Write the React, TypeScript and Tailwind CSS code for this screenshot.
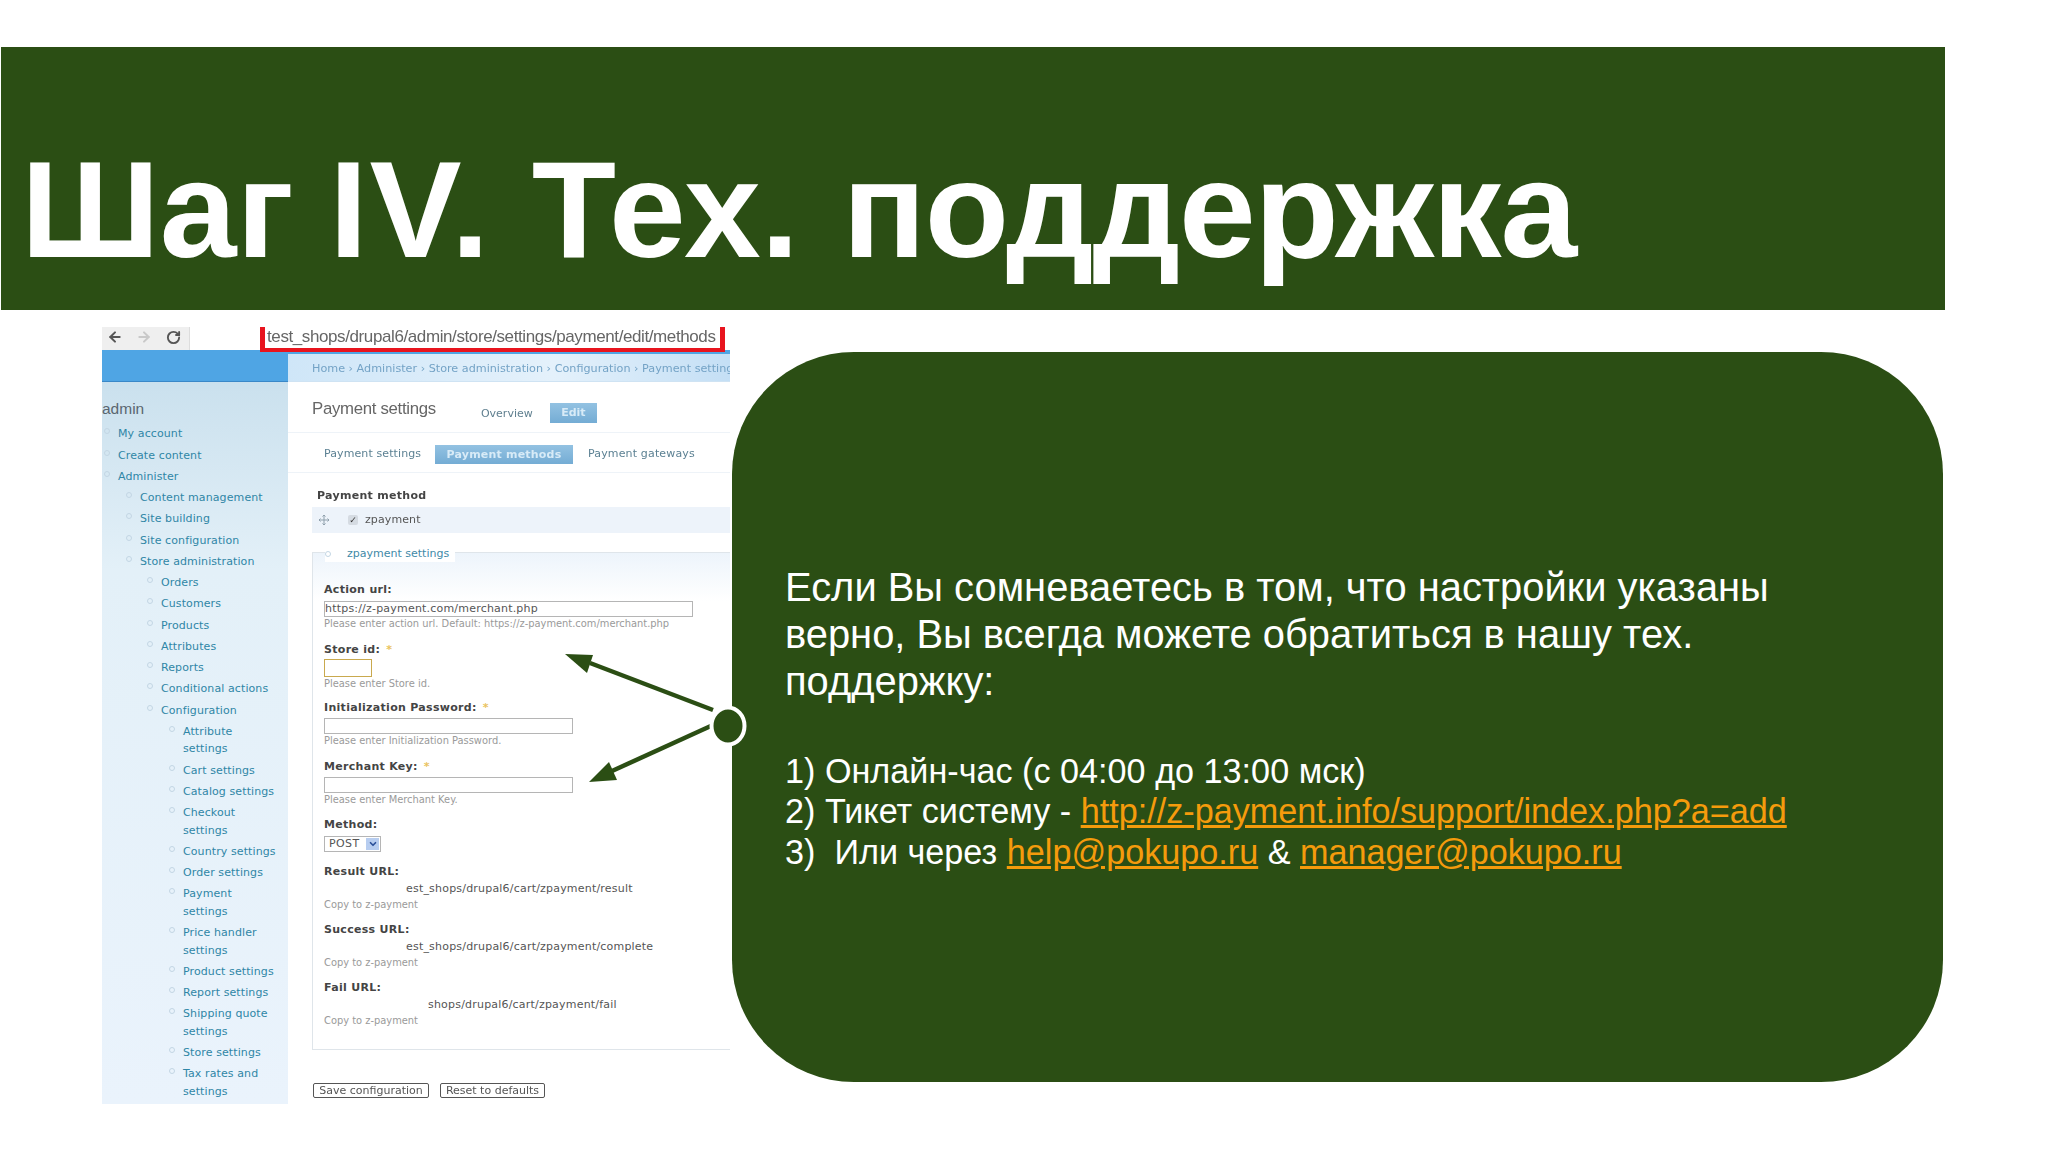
import React from "react";
import { ArrowLeft, ArrowRight, ChevronDown, RotateCw } from "lucide-react";

const menu: [string, number][] = [
  ["My account", 0],
  ["Create content", 0],
  ["Administer", 0],
  ["Content management", 1],
  ["Site building", 1],
  ["Site configuration", 1],
  ["Store administration", 1],
  ["Orders", 2],
  ["Customers", 2],
  ["Products", 2],
  ["Attributes", 2],
  ["Reports", 2],
  ["Conditional actions", 2],
  ["Configuration", 2],
  ["Attribute\nsettings", 3],
  ["Cart settings", 3],
  ["Catalog settings", 3],
  ["Checkout\nsettings", 3],
  ["Country settings", 3],
  ["Order settings", 3],
  ["Payment\nsettings", 3],
  ["Price handler\nsettings", 3],
  ["Product settings", 3],
  ["Report settings", 3],
  ["Shipping quote\nsettings", 3],
  ["Store settings", 3],
  ["Tax rates and\nsettings", 3],
];

const indent = ["pl-[16px]", "pl-[38px]", "pl-[59px]", "pl-[81px]"];

function Sidebar() {
  return (
    <div className="w-[186px] shrink-0 flex flex-col bg-[linear-gradient(#c6deec,#e3f0f8_220px,#eaf3fc)]">
      <div className="h-[32px] bg-[#4fa5e4] border-b border-[#3a88c8]" />
      <div className="h-[44px] pt-[17px] font-['Liberation_Sans',sans-serif] text-[15.5px] leading-[20px] text-[#5a6670]">
        admin
      </div>
      <ul className="font-['DejaVu_Sans',sans-serif] text-[11px] leading-[17.5px] tracking-[0.1px] text-[#2f86a6]">
        {menu.map(([label, level]) => (
          <li key={label} className={`relative mb-[3.75px] whitespace-pre-line ${indent[level]}`}>
            <span className="absolute top-[3px] -ml-[14px] h-[6px] w-[6px] rounded-full border border-[#c3d6e4]" />
            {label}
          </li>
        ))}
      </ul>
    </div>
  );
}

function Label({ text, required }: { text: string; required?: boolean }) {
  return (
    <div className="h-[16px] leading-[16px] font-bold tracking-[0.3px] text-[#444]">
      {text}
      {required && <span className="ml-[6px] text-[#eac35e]">*</span>}
    </div>
  );
}

function Help({ text, className = "" }: { text: string; className?: string }) {
  return <div className={`h-[14px] leading-[14px] text-[9.9px] text-[#9a9a9a] ${className}`}>{text}</div>;
}

function Input({ className, children }: { className: string; children?: React.ReactNode }) {
  return <div className={`border border-[#b5b5b5] bg-white leading-[14px] ${className}`}>{children}</div>;
}

function UrlField({ label, value, pad, mt }: { label: string; value: string; pad: string; mt: string }) {
  return (
    <div className={mt}>
      <Label text={label} />
      <div className={`mt-[1px] h-[16px] leading-[16px] tracking-[0.2px] text-[#555] ${pad}`}>{value}</div>
      <Help text="Copy to z-payment" className="mt-[1px]" />
    </div>
  );
}

function Main() {
  return (
    <div className="flex-1 flex flex-col min-w-0 font-['DejaVu_Sans',sans-serif] text-[11px] text-[#555]">
      <div className="h-[32px] border-t-4 border-[#4fa5e4] border-b border-b-[#cfe3f3] bg-[linear-gradient(90deg,#cfe6f8,#e4f1fb_60%,#c4dff5)] pl-[24px] leading-[29px] text-[11.2px] text-[#74a3c6] whitespace-nowrap overflow-hidden">
        Home › Administer › Store administration › Configuration › Payment settings
      </div>

      <div className="h-[51px] flex items-start pl-[24px] border-b border-[#eef3f8]">
        <div className="mt-[16px] font-['Liberation_Sans',sans-serif] text-[16.8px] leading-[22px] text-[#666] tracking-[-0.3px]">
          Payment settings
        </div>
        <div className="ml-[45px] mt-[24px] w-[54px] leading-[16px] text-[#5f7f8f]">Overview</div>
        <div className="ml-[15px] mt-[21px] h-[20px] w-[47px] bg-[linear-gradient(#93c2e2,#74acd4)] text-center font-bold leading-[20px] text-[#d8ebf7]">
          Edit
        </div>
      </div>

      <div className="h-[40px] flex items-center pl-[36px] pt-[3px] border-b border-[#eef3f8] text-[#5c8193]">
        <span className="w-[111px] tracking-[0.1px]">Payment settings</span>
        <span className="h-[19px] w-[138px] bg-[linear-gradient(#93c2e2,#74acd4)] text-center font-bold leading-[19px] tracking-[0.2px] text-[#d8ebf7]">
          Payment methods
        </span>
        <span className="ml-[15px] tracking-[0.15px]">Payment gateways</span>
      </div>

      <div className="h-[34px] pt-[15px] pl-[29px] font-bold leading-[16px] tracking-[0.3px] text-[#444]">Payment method</div>
      <div className="ml-[24px] h-[26px] flex items-center bg-[#edf3fa]">
        <svg viewBox="0 0 12 12" className="ml-[6px] h-[12px] w-[12px] text-[#8fa0ac]" fill="none" stroke="currentColor">
          <path d="M6 1v10M1 6h10M4.500 2.500 6 1l1.500 1.500M4.500 9.500 6 11l1.500-1.500M2.500 4.500 1 6l1.500 1.500M9.500 4.500 11 6 9.500 7.500" />
        </svg>
        <span className="ml-[18px] h-[10px] w-[10px] rounded-[2px] bg-[#d5dbe2] text-center text-[9px] leading-[10px] text-[#333]">✓</span>
        <span className="ml-[7px] tracking-[0.1px]">zpayment</span>
      </div>

      <div className="relative mt-[19px] ml-[24px] h-[498px] border-l border-t border-b border-[#dfe5ea] bg-[linear-gradient(#edf4fb,#ffffff_48px)] pl-[11px] pt-[29px]">
        <div className="absolute -top-[7px] left-[12px] flex h-[16px] items-center bg-white pr-[6px] leading-[16px] text-[#3f8aa8]">
          <span className="mr-[16px] h-[6px] w-[6px] rounded-full border border-[#c3d6e4]" />
          zpayment settings
        </div>

        <Label text="Action url:" />
        <Input className="mt-[3px] h-[16px] w-[369px] tracking-[0.2px]">https://z-payment.com/merchant.php</Input>
        <Help text="Please enter action url. Default: https://z-payment.com/merchant.php" />

        <div className="mt-[11px]">
          <Label text="Store id:" required />
          <Input className="mt-[1px] h-[18px] w-[48px] !border-[#c9a94e]" />
          <Help text="Please enter Store id." />
        </div>

        <div className="mt-[9px]">
          <Label text="Initialization Password:" required />
          <Input className="mt-[2px] h-[16px] w-[249px]" />
          <Help text="Please enter Initialization Password." />
        </div>

        <div className="mt-[11px]">
          <Label text="Merchant Key:" required />
          <Input className="mt-[2px] h-[16px] w-[249px]" />
          <Help text="Please enter Merchant Key." />
        </div>

        <div className="mt-[10px]">
          <Label text="Method:" />
          <Input className="mt-[3px] flex h-[16px] w-[57px] items-center pl-[4px] tracking-[0.4px]">
            POST
            <span className="ml-auto mr-[1px] flex h-[12px] w-[13px] items-center justify-center bg-[#b7cdf0] text-[#2a4f9a]">
              <ChevronDown size={10} strokeWidth={4} />
            </span>
          </Input>
        </div>

        <UrlField mt="mt-[12px]" label="Result URL:" pad="pl-[82px]" value="est_shops/drupal6/cart/zpayment/result" />
        <UrlField mt="mt-[10px]" label="Success URL:" pad="pl-[82px]" value="est_shops/drupal6/cart/zpayment/complete" />
        <UrlField mt="mt-[10px]" label="Fail URL:" pad="pl-[104px]" value="shops/drupal6/cart/zpayment/fail" />
      </div>

      <div className="mt-[33px] ml-[25px] flex gap-[11px] text-[#555]">
        <div className="h-[15px] w-[116px] rounded-[2px] border border-[#555] text-center leading-[13px]">Save configuration</div>
        <div className="h-[15px] w-[105px] rounded-[2px] border border-[#555] text-center leading-[13px]">Reset to defaults</div>
      </div>
    </div>
  );
}

function Shot() {
  return (
    <div className="mt-[17px] ml-[102px] w-[628px] h-[777px] shrink-0 flex flex-col overflow-hidden blur-[0.5px]">
      <div className="h-[23px] flex shrink-0">
        <div className="w-[88px] flex items-center bg-[#efefef] border-r border-[#ddd] pl-[5px] pb-[3px]">
          <ArrowLeft size={16} strokeWidth={3} className="text-[#555]" />
          <ArrowRight size={16} strokeWidth={3} className="ml-[13px] text-[#c9c9c9]" />
          <RotateCw size={15} strokeWidth={3} className="ml-[14px] text-[#555]" />
        </div>
        <div className="relative z-10 ml-[70px] h-[25px] w-[465px] border-x-[5px] border-b-4 border-[#e8141e] pl-[2px] font-['Liberation_Sans',sans-serif] text-[17px] leading-[20px] tracking-[-0.4px] text-[#666] whitespace-nowrap">
          test_shops/drupal6/admin/store/settings/payment/edit/methods
        </div>
      </div>
      <div className="flex flex-1 min-h-0">
        <Sidebar />
        <Main />
      </div>
    </div>
  );
}

export default function App() {
  return (
    <div className="relative w-[2048px] h-[1152px] overflow-hidden bg-white pt-[47px] font-['Liberation_Sans',sans-serif] text-white">
      <div className="ml-[1px] w-[1944px] h-[263px] bg-[#2b4e14] pl-[20px] pt-[87px] text-[138px] leading-[150px] font-bold whitespace-nowrap">
        Шаг <span className="-ml-[3px] tracking-[2px]">IV.</span> <span className="ml-[2px]">Тех.</span>{" "}
        <span className="ml-[5px] tracking-[-1.15px]">поддержка</span>
      </div>
      <div className="flex items-start">
        <Shot />
        <div className="mt-[42px] ml-[2px] w-[1211px] h-[730px] rounded-[122px] bg-[#2b4e14] pl-[53px] pt-[2px] flex flex-col justify-center">
          <p className="w-[1100px] text-[39.9px] leading-[47px]">
            Если Вы сомневаетесь в том, что настройки указаны верно, Вы всегда можете обратиться в нашу тех. поддержку:
          </p>
          <div className="mt-[46px] text-[34.2px] leading-[40.5px] whitespace-nowrap">
            <div>1) Онлайн-час (с 04:00 до 13:00 мск)</div>
            <div>
              2) Тикет систему - <span className="text-[#f59b0c] underline">http://z-payment.info/support/index.php?a=add</span>
            </div>
            <div>
              3)&nbsp; Или через <span className="text-[#f59b0c] underline">help@pokupo.ru</span> &amp;{" "}
              <span className="text-[#f59b0c] underline">manager@pokupo.ru</span>
            </div>
          </div>
        </div>
      </div>
      {/* arrows from the round dot to the form fields */}
      <svg className="absolute left-0 top-0 h-[1152px] w-[2048px] pointer-events-none" viewBox="0 0 2048 1152">
        <path d="M713 710 590 663" stroke="#2b4e14" strokeWidth="4.500" />
        <path d="M713 725 612 771" stroke="#2b4e14" strokeWidth="4.500" />
        <path d="M565 654 593 655 587 673Z" fill="#2b4e14" />
        <path d="M589 782 609 762 617 780Z" fill="#2b4e14" />
        <ellipse cx="728" cy="726" rx="16.500" ry="18.500" fill="#2b4e14" stroke="#fff" strokeWidth="4" />
      </svg>
    </div>
  );
}
